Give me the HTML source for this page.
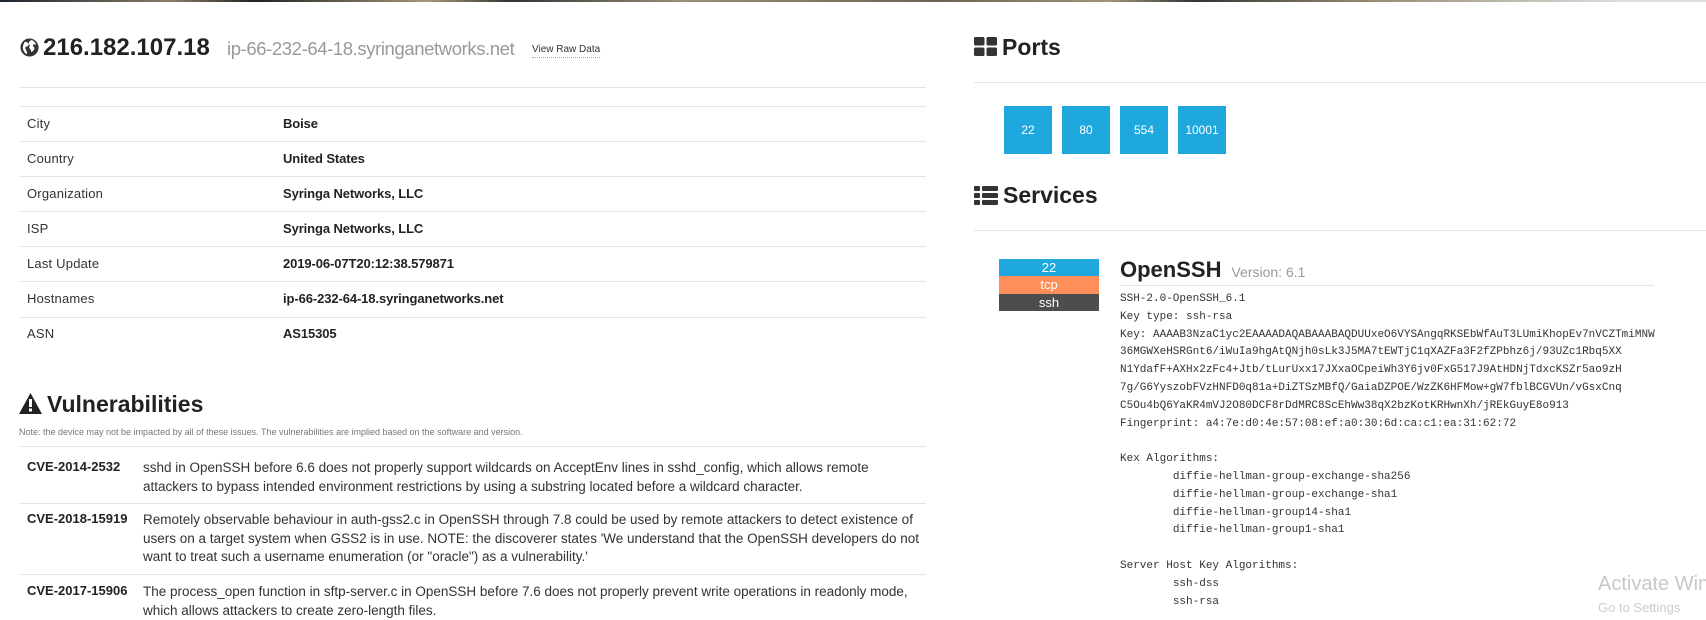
<!DOCTYPE html>
<html><head><meta charset="utf-8"><style>
body{margin:0;width:1706px;height:606px;overflow:hidden;background:#fff;font-family:"Liberation Sans",sans-serif;color:#333;position:relative}
.a{position:absolute;white-space:nowrap}
.strip{position:absolute;left:0;top:0;width:1706px;height:2px;background:linear-gradient(90deg,#1c2430,#8a7d66 10%,#222 15%,#a59878 25%,#333 30%,#9a8f78 40%,#6a6450 55%,#a0957a 65%,#333 70%,#958a70 80%,#ddd 95%)}
.hl{position:absolute;height:1px;background:#e4e4e4}
.tl{font-size:13px;color:#333;letter-spacing:.2px}
.tv{font-size:13px;color:#222;font-weight:600;letter-spacing:-.1px}
h2{margin:0;position:absolute;font-size:23px;font-weight:bold;color:#222;white-space:nowrap;line-height:28px}
.port{position:absolute;top:106px;width:48px;height:48px;background:#1fa8dd;color:#fff;font-size:12px;text-align:center;line-height:48px}
.mono{position:absolute;left:1120px;font-family:"Liberation Mono",monospace;font-size:11px;color:#333;white-space:pre;line-height:17.8px;top:291px}
.cve{font-size:13px;font-weight:bold;color:#222}
.desc{font-size:13.5px;color:#333;line-height:18.5px;white-space:nowrap}
</style></head><body>
<div class="strip"></div>

<svg class="a" style="left:20px;top:38px" width="19" height="19" viewBox="0 0 20 20"><circle cx="10" cy="10" r="9.5" fill="#333"/><path d="M5 4c2 0 3 1 4 2s-1 3-2 3-2 1-1 3 2 3 1 5c-2-1-4-4-4-7 0-2 1-4 2-6zM12 2c2 1 4 2 5 5-1 0-2-1-3 0s0 2 1 3-1 4-3 5c0-2-1-3-2-4s1-3 0-4-2-2 2-5z" fill="#fff"/></svg>
<div class="a" style="left:43px;top:33px;font-size:24px;font-weight:bold;color:#222;line-height:30px">216.182.107.18</div>
<div class="a" style="left:227px;top:36px;font-size:18.5px;color:#999;line-height:26px;letter-spacing:-.4px">ip-66-232-64-18.syringanetworks.net</div>
<div class="a" style="left:532px;top:43px;font-size:10px;color:#333;line-height:14px;border-bottom:1px dotted #aaa">View Raw Data</div>

<div class="hl" style="left:19px;width:907px;top:87px"></div>
<div class="hl" style="left:19px;width:907px;top:106px"></div>
<div class="hl" style="left:19px;width:907px;top:141px"></div>
<div class="hl" style="left:19px;width:907px;top:176px"></div>
<div class="hl" style="left:19px;width:907px;top:211px"></div>
<div class="hl" style="left:19px;width:907px;top:246px"></div>
<div class="hl" style="left:19px;width:907px;top:281px"></div>
<div class="hl" style="left:19px;width:907px;top:317px"></div>
<div class="a tl" style="left:27px;top:116px">City</div><div class="a tv" style="left:283px;top:116px">Boise</div>
<div class="a tl" style="left:27px;top:151px">Country</div><div class="a tv" style="left:283px;top:151px">United States</div>
<div class="a tl" style="left:27px;top:186px">Organization</div><div class="a tv" style="left:283px;top:186px">Syringa Networks, LLC</div>
<div class="a tl" style="left:27px;top:221px">ISP</div><div class="a tv" style="left:283px;top:221px">Syringa Networks, LLC</div>
<div class="a tl" style="left:27px;top:256px">Last Update</div><div class="a tv" style="left:283px;top:256px">2019-06-07T20:12:38.579871</div>
<div class="a tl" style="left:27px;top:291px">Hostnames</div><div class="a tv" style="left:283px;top:291px">ip-66-232-64-18.syringanetworks.net</div>
<div class="a tl" style="left:27px;top:326px">ASN</div><div class="a tv" style="left:283px;top:326px">AS15305</div>

<svg class="a" style="left:19px;top:393px" width="23" height="21" viewBox="0 0 23 21"><path d="M11.5 0L23 21H0z" fill="#222"/><rect x="10" y="6" width="3" height="8" fill="#fff"/><rect x="10" y="15.5" width="3" height="3" fill="#fff"/></svg>
<h2 style="left:47px;top:390px">Vulnerabilities</h2>
<div class="a" style="left:19px;top:427px;font-size:9px;color:#777">Note: the device may not be impacted by all of these issues. The vulnerabilities are implied based on the software and version.</div>
<div class="hl" style="left:19px;width:907px;top:446px"></div>
<div class="a cve" style="left:27px;top:459px">CVE-2014-2532</div>
<div class="a desc" style="left:143px;top:459px">sshd in OpenSSH before 6.6 does not properly support wildcards on AcceptEnv lines in sshd_config, which allows remote<br>attackers to bypass intended environment restrictions by using a substring located before a wildcard character.</div>
<div class="hl" style="left:19px;width:907px;top:503px"></div>
<div class="a cve" style="left:27px;top:511px">CVE-2018-15919</div>
<div class="a desc" style="left:143px;top:511px">Remotely observable behaviour in auth-gss2.c in OpenSSH through 7.8 could be used by remote attackers to detect existence of<br>users on a target system when GSS2 is in use. NOTE: the discoverer states 'We understand that the OpenSSH developers do not<br>want to treat such a username enumeration (or "oracle") as a vulnerability.'</div>
<div class="hl" style="left:19px;width:907px;top:574px"></div>
<div class="a cve" style="left:27px;top:583px">CVE-2017-15906</div>
<div class="a desc" style="left:143px;top:583px">The process_open function in sftp-server.c in OpenSSH before 7.6 does not properly prevent write operations in readonly mode,<br>which allows attackers to create zero-length files.</div>

<svg class="a" style="left:974px;top:37px" width="23" height="19" viewBox="0 0 23 19"><rect x="0" y="0" width="10.5" height="8.5" rx="1.5" fill="#333"/><rect x="12.5" y="0" width="10.5" height="8.5" rx="1.5" fill="#333"/><rect x="0" y="10.5" width="10.5" height="8.5" rx="1.5" fill="#333"/><rect x="12.5" y="10.5" width="10.5" height="8.5" rx="1.5" fill="#333"/></svg>
<h2 style="left:1002px;top:33px">Ports</h2>
<div class="hl" style="left:974px;width:732px;top:82px"></div>
<div class="port" style="left:1004px">22</div>
<div class="port" style="left:1062px">80</div>
<div class="port" style="left:1120px">554</div>
<div class="port" style="left:1178px">10001</div>

<svg class="a" style="left:974px;top:186px" width="24" height="19" viewBox="0 0 24 19"><rect x="0" y="0" width="6" height="5" rx="1" fill="#333"/><rect x="8" y="0" width="16" height="5" rx="1" fill="#333"/><rect x="0" y="7" width="6" height="5" rx="1" fill="#333"/><rect x="8" y="7" width="16" height="5" rx="1" fill="#333"/><rect x="0" y="14" width="6" height="5" rx="1" fill="#333"/><rect x="8" y="14" width="16" height="5" rx="1" fill="#333"/></svg>
<h2 style="left:1003px;top:181px">Services</h2>
<div class="hl" style="left:974px;width:732px;top:230px"></div>

<div class="a" style="left:999px;top:259px;width:100px;height:17px;background:#1fa8dd;color:#fff;font-size:13px;text-align:center;line-height:17px">22</div>
<div class="a" style="left:999px;top:276px;width:100px;height:18px;background:#ff8f5a;color:#fff;font-size:13px;text-align:center;line-height:18px">tcp</div>
<div class="a" style="left:999px;top:294px;width:100px;height:17px;background:#4d4d4d;color:#fff;font-size:13px;text-align:center;line-height:17px">ssh</div>

<div class="a" style="left:1120px;top:256px;font-size:22px;font-weight:bold;color:#222;line-height:28px">OpenSSH <span style="font-size:14px;font-weight:normal;color:#999">&nbsp;Version: 6.1</span></div>
<div class="hl" style="left:1120px;width:534px;top:285px"></div>
<div class="mono">SSH-2.0-OpenSSH_6.1
Key type: ssh-rsa
Key: AAAAB3NzaC1yc2EAAAADAQABAAABAQDUUxeO6VYSAngqRKSEbWfAuT3LUmiKhopEv7nVCZTmiMNW
36MGWXeHSRGnt6/iWuIa9hgAtQNjh0sLk3J5MA7tEWTjC1qXAZFa3F2fZPbhz6j/93UZc1Rbq5XX
N1YdafF+AXHx2zFc4+Jtb/tLurUxx17JXxaOCpeiWh3Y6jv0FxG517J9AtHDNjTdxcKSZr5ao9zH
7g/G6YyszobFVzHNFD0q81a+DiZTSzMBfQ/GaiaDZPOE/WzZK6HFMow+gW7fblBCGVUn/vGsxCnq
C5Ou4bQ6YaKR4mVJ2O80DCF8rDdMRC8ScEhWw38qX2bzKotKRHwnXh/jREkGuyE8o913
Fingerprint: a4:7e:d0:4e:57:08:ef:a0:30:6d:ca:c1:ea:31:62:72

Kex Algorithms:
	diffie-hellman-group-exchange-sha256
	diffie-hellman-group-exchange-sha1
	diffie-hellman-group14-sha1
	diffie-hellman-group1-sha1

Server Host Key Algorithms:
	ssh-dss
	ssh-rsa</div>
<div class="a" style="left:1598px;top:573px;font-size:20px;color:#c8c8c8">Activate Windows</div>
<div class="a" style="left:1598px;top:600px;font-size:13px;color:#ccc">Go to Settings</div>
</body></html>
